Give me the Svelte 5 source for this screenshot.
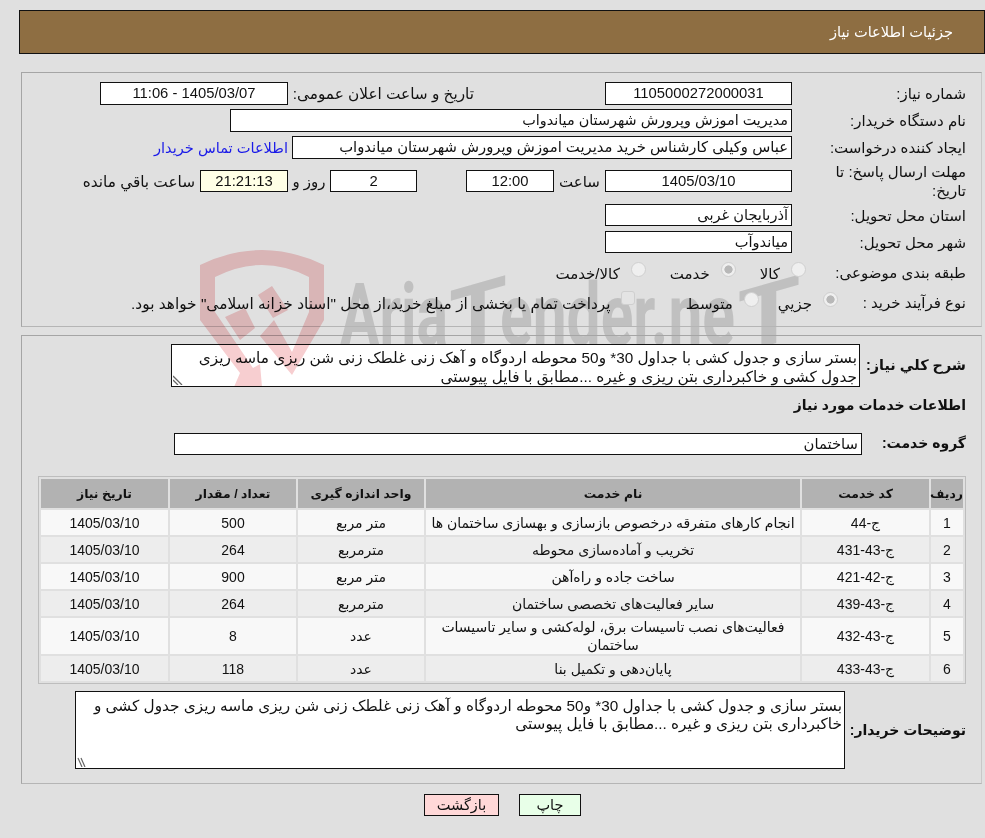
<script>
  const rows = [
    ['1','ج-44','انجام کارهای متفرقه درخصوص بازسازی و بهسازی ساختمان ها','متر مربع','500'],
    ['2','ج-43-431','تخریب و آماده‌سازی محوطه','مترمربع','264'],
    ['3','ج-42-421','ساخت جاده و راه‌آهن','متر مربع','900'],
    ['4','ج-43-439','سایر فعالیت‌های تخصصی ساختمان','مترمربع','264'],
    ['5','ج-43-432','فعالیت‌های نصب تاسیسات برق، لوله‌کشی و سایر تاسیسات ساختمان','عدد','8'],
    ['6','ج-43-433','پایان‌دهی و تکمیل بنا','عدد','118']
  ];
</script>

<div class="page" dir="rtl">
  <svg class="mark-under" width="480" height="110" viewBox="0 0 480 110" aria-hidden="true">
    <text x="2" y="105" textLength="108" lengthAdjust="spacingAndGlyphs" class="mark-text">Aria</text>
    <text transform="translate(140 105) skewY(-16)" text-anchor="middle" textLength="58" lengthAdjust="spacingAndGlyphs" class="mark-text">T</text>
    <text x="162" y="105" textLength="235" lengthAdjust="spacingAndGlyphs" class="mark-text">ender.ne</text>
    <text transform="translate(431 105) skewY(-16)" text-anchor="middle" textLength="63" lengthAdjust="spacingAndGlyphs" class="mark-text">T</text>
  </svg>
  <svg class="mark-over" width="150" height="147" viewBox="0 0 150 147" aria-hidden="true">
    <path d="M10 25 Q72 -5 134 25 L134 80 L102 135 L70 96 L84 80 L102 112 L119 72 L119 37 Q72 13 25 37 L25 72 L63 128 L70 124 L72 147 L44 147 L50 133 L10 80 Z" fill="#f7ced0"/>
    <path d="M35 77 L55 68 L65 88 L50 100 Z M68 55 L82 46 L98 70 L83 78 Z" fill="#f7ced0"/>
  </svg>

  <div class="head">جزئیات اطلاعات نیاز</div>

  <section class="panel one">
    <div class="row">
      <span class="lab">شماره نیاز:</span><span class="box w187 c num">1105000272000031</span>
      <span class="mid">تاریخ و ساعت اعلان عمومی:</span><span class="box w188 c num">1405/03/07 - 11:06</span>
    </div>
    <div class="row">
      <span class="lab">نام دستگاه خریدار:</span><span class="box w562 s144">مدیریت اموزش وپرورش شهرستان میاندواب</span>
    </div>
    <div class="row">
      <span class="lab">ایجاد کننده درخواست:</span><span class="box w500">عباس وکیلی کارشناس خرید مدیریت اموزش وپرورش شهرستان میاندواب</span>
      <a class="link" href="#top">اطلاعات تماس خریدار</a>
    </div>
    <div class="row deadline">
      <span class="lab two">مهلت ارسال پاسخ: تا تاریخ:</span><span class="box w187 c num">1405/03/10</span>
      <span class="t-hour">ساعت</span><span class="box w88 c num">12:00</span>
      <span class="box w87 c num gap-d">2</span><span class="t-day">روز و</span>
      <span class="box w88 c num yellow">21:21:13</span><span class="t-left">ساعت باقي مانده</span>
    </div>
    <div class="row low r5">
      <span class="lab">استان محل تحویل:</span><span class="box w187">آذربایجان غربی</span>
    </div>
    <div class="row low">
      <span class="lab">شهر محل تحویل:</span><span class="box w187">میاندوآب</span>
    </div>
    <div class="row radios r7">
      <span class="rlab">طبقه بندی موضوعی:</span>
      <span class="radio"></span><span class="opt">کالا</span>
      <span class="radio on"></span><span class="opt">خدمت</span>
      <span class="radio"></span><span class="opt">کالا/خدمت</span>
    </div>
    <div class="row radios r8">
      <span class="rlab">نوع فرآیند خرید :</span>
      <span class="radio on"></span><span class="opt">جزیي</span>
      <span class="radio"></span><span class="opt o2">متوسط</span>
      <span class="check"></span><span class="opt long">پرداخت تمام یا بخشی از مبلغ خرید،از محل "اسناد خزانه اسلامی" خواهد بود.</span>
    </div>
  </section>

  <section class="panel two-p">
    <div class="desc-row">
      <b class="blab">شرح کلي نیاز:</b>
      <div class="tarea small">بستر سازی و جدول کشی با جداول 30* و50 محوطه اردوگاه و آهک زنی غلطک زنی شن ریزی ماسه ریزی<br />جدول کشی و خاکبرداری بتن ریزی و غیره ...مطابق با فایل پیوستی<svg class="grip" width="10" height="10" viewBox="0 0 10 10"><path d="M0 1 L9 10 M0 5 L5 10" stroke="#666" fill="none" stroke-width="1.3" /></svg></div>
    </div>
    <b class="title">اطلاعات خدمات مورد نیاز</b>
    <div class="group-row">
      <b class="glab">گروه خدمت:</b><span class="box group">ساختمان</span>
    </div>
    <div class="table-wrap">
      <table>
        <thead><tr><th class="col1">ردیف</th><th class="col2">کد خدمت</th><th class="col3">نام خدمت</th><th class="col4">واحد اندازه گیری</th><th class="col5">تعداد / مقدار</th><th>تاریخ نیاز</th></tr></thead>
        <tbody>
          {#each rows as r}
            <tr>{#each r as c}<td>{c}</td>{/each}<td>1405/03/10</td></tr>
          {/each}
        </tbody>
      </table>
    </div>
    <div class="buyer-row">
      <b class="buyer-lab">توضیحات خریدار:</b>
      <div class="tarea big">بستر سازی و جدول کشی با جداول 30* و50 محوطه اردوگاه و آهک زنی غلطک زنی شن ریزی ماسه ریزی جدول کشی و<br />خاکبرداری بتن ریزی و غیره ...مطابق با فایل پیوستی<svg class="grip" width="10" height="10" viewBox="0 0 10 10"><path d="M1 1 L5 10 M4 1 L8 10" stroke="#666" fill="none" stroke-width="1.2" /></svg></div>
    </div>
  </section>

  <div class="buttons">
    <button class="print">چاپ</button>
    <button class="back">بازگشت</button>
  </div>
</div>

<style>
  :global(body) { margin: 0; background: #e0e0e0; }
  .page { position: relative; height: 838px; overflow: hidden; box-sizing: border-box; padding-top: 10px; font: 15px/17px "Liberation Sans", "DejaVu Sans", sans-serif; color: #111; }
  .mark-under { position: absolute; left: 338px; top: 240px; direction: ltr; overflow: visible; }
  .mark-over { position: absolute; left: 190px; top: 240px; z-index: 3; mix-blend-mode: multiply; pointer-events: none; }
  .mark-text { font: bold 87px "Roboto", sans-serif; fill: #c0c0c0; direction: ltr; }
  .head { position: relative; box-sizing: border-box; height: 44px; margin-left: 19px; background: #8e6e42; border: 1px solid #111; color: #fff; padding: 13px 31px 0 0; font-size: 14.6px; }
  .panel { position: relative; box-sizing: border-box; margin-right: 3px; margin-left: 21px; border: 1px solid #a5a5a5; border-right-color: #c8c8c8; border-bottom-color: #b5b5b5; }
  .one { height: 255px; margin-top: 18px; padding-top: 9px; }
  .two-p { height: 449px; margin-top: 8px; }
  .row { display: flex; align-items: center; height: 23px; margin-bottom: 4px; }
  .lab { flex: none; width: 189px; box-sizing: border-box; padding-right: 15px; white-space: nowrap; }
  .lab.two { white-space: normal; padding-left: 20px; line-height: 19px; }
  .box { flex: none; box-sizing: border-box; height: 23px; background: #fff; border: 1px solid #111; padding: 0 3px; white-space: nowrap; line-height: 21px; overflow: hidden; font-size: 14.8px; }
  .box.s144 { font-size: 14.4px; }
  .low .box, .deadline .box { height: 22px; line-height: 20px; font-size: 14.6px; }
  .box.c.num { font-size: 14.8px; }
  .c { text-align: center; }
  .w187 { width: 187px; }
  .w188 { width: 188px; }
  .w562 { width: 562px; }
  .w500 { width: 500px; }
  .w88 { width: 88px; }
  .w87 { width: 87px; }
  .mid { width: 317px; box-sizing: border-box; padding-right: 131px; white-space: nowrap; font-size: 15.3px; }
  .link { color: #1a1ae8; text-decoration: none; margin-right: 4px; white-space: nowrap; font-size: 14.6px; padding-top: 2px; }
  .deadline { margin-top: 11px; height: 22px; margin-bottom: 12px; }
  .t-hour { width: 51px; text-align: center; }
  .gap-d { margin-right: 49px; }
  .t-day { width: 42px; text-align: center; }
  .yellow { background: #ffffe6; }
  .t-left { margin-right: 5px; white-space: nowrap; font-size: 15.3px; }
  .low { height: 22px; }
  .r5 { margin-bottom: 5px; }
  .radios { height: 20px; }
  .r7 { margin-top: 9px; margin-bottom: 10px; }
  .r8 { margin-bottom: 0; }
  .rlab { flex: none; box-sizing: border-box; padding-right: 15px; white-space: nowrap; }
  .r7 .rlab { width: 175px; }
  .r8 .rlab { width: 143px; }
  .radio { flex: none; box-sizing: border-box; width: 15px; height: 15px; border-radius: 50%; background: #efefef; border: 1px solid #cfcfcf; transform: translateY(-3px); }
  .radio.on { background: radial-gradient(circle, #b8b8b8 0 3.8px, #efefef 4.4px); }
  .check { flex: none; box-sizing: border-box; width: 14px; height: 14px; background: #e4e4e4; border: 1px solid #cfcfcf; border-radius: 3px; transform: translateY(-4px); }
  .opt { white-space: nowrap; margin-right: 11px; transform: translateY(1px); }
  .opt.long { font-size: 15.4px; margin-right: 10px; }
  .r7 .opt { margin-left: 24px; }
  .r8 .opt { margin-left: 19px; }
  .r8 .o2 { margin-left: 51px; }
  .desc-row { display: flex; padding-top: 8px; align-items: center; }
  .blab { flex: none; width: 121px; box-sizing: border-box; padding-right: 15px; white-space: nowrap; font-size: 14.4px; }
  .tarea { position: relative; box-sizing: border-box; background: #fff; border: 1px solid #111; overflow: hidden; white-space: nowrap; padding: 4px 2px 0; line-height: 18.5px; text-align: right; }
  .small { width: 689px; height: 43px; font-size: 15.3px; }
  .grip { position: absolute; left: 1px; bottom: 1px; }
  .title { display: block; padding: 8px 15px 0 0; height: 37px; line-height: 20px; box-sizing: border-box; font-size: 14px; }
  .group-row { display: flex; align-items: center; height: 23px; margin-top: 8px; }
  .glab { flex: none; box-sizing: border-box; width: 119px; padding-right: 15px; white-space: nowrap; font-size: 14px; }
  .group { width: 688px; height: 22px; line-height: 20px; }
  .table-wrap { box-sizing: border-box; width: 928px; margin: 21px 15px 0 0; border: 1px solid #bdbdbd; }
  table { width: 926px; border-collapse: separate; border-spacing: 2px; table-layout: fixed; margin: 0; font-size: 14px; }
  th { height: 28px; padding: 1px 0 0; background: #b2b2b2; font-size: 12.4px; font-weight: bold; white-space: nowrap; }
  td { height: 25px; padding: 0; text-align: center; background: #f8f8f8; line-height: 18px; }
  tbody tr:nth-child(even) td { background: #ededed; }
  tbody tr:nth-child(5) td { height: 36px; }
  .col1 { width: 32px; } .col2 { width: 127px; } .col3 { width: 374px; } .col4 { width: 126px; } .col5 { width: 126px; }
  .buyer-row { display: flex; align-items: center; margin-top: 7px; }
  .buyer-lab { flex: none; width: 136px; box-sizing: border-box; white-space: nowrap; padding-right: 15px; font-size: 14px; }
  .big { width: 770px; height: 78px; padding: 5px 2px 0; font-size: 15.3px; line-height: 18px; }
  .buttons { display: flex; justify-content: center; gap: 20px; margin-top: 10px; padding-left: 20px; }
  button { font: 14.5px "Liberation Sans", "DejaVu Sans", sans-serif; color: #111; height: 22px; box-sizing: border-box; border: 1px solid #111; padding: 0; }
  .print { width: 62px; background: #e8ffe8; }
  .back { width: 75px; background: #ffd8d8; }
</style>
